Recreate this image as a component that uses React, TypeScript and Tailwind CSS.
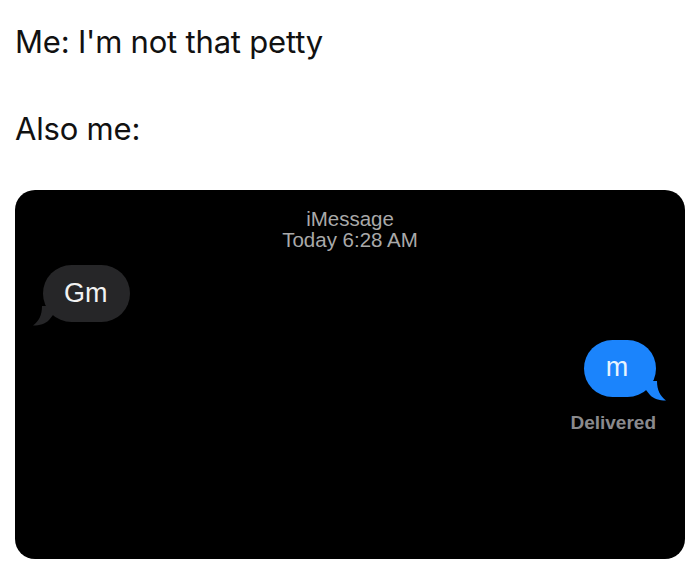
import React from "react";

function Tail({ color, flip }: { color: string; flip?: boolean }) {
  return (
    <svg
      width="20"
      height="20"
      viewBox="0 0 20 20"
      className={flip ? "absolute right-[-10px] bottom-[-4px]" : "absolute left-[-10px] bottom-[-4px]"}
      style={flip ? { transform: "scaleX(-1)" } : undefined}
    >
      <path d="M9 0 C9 9 6 15 0 19.5 C7 19.5 12 18 16 14 L20 9 L20 0 Z" fill={color} />
    </svg>
  );
}

export default function App() {
  return (
    <div className="w-[700px] h-[571px] bg-white overflow-hidden" style={{ fontFamily: '"Liberation Sans", Arial, sans-serif' }}>
      <div className="pl-[15px] pt-[24px] text-[31px] leading-[36px] text-[#111] tracking-[-0.2px]" style={{ fontFamily: 'Inter, "Liberation Sans", sans-serif' }}>
        <div>Me: I'm not that petty</div>
        <div className="mt-[51px]">Also me:</div>
      </div>
      <div className="mx-[15px] mt-[43px] h-[369px] rounded-[20px] bg-black flex flex-col">
        <div className="pt-[18px] text-center text-[20.5px] leading-[21px] text-[#a9a9a9]">
          <div>iMessage</div>
          <div>Today 6:28 AM</div>
        </div>
        <div className="mt-[15px] pl-[28px] flex">
          <div className="relative h-[57px] rounded-full bg-[#262628] pl-[21px] pr-[22px] flex items-center text-[27px] text-[#f2f2f2]">
            Gm
            <Tail color="#262628" />
          </div>
        </div>
        <div className="mt-[18px] pr-[29px] flex flex-col items-end">
          <div className="relative h-[57px] w-[72px] rounded-full bg-[#1b84fc] flex items-center justify-center text-[27px] text-[#e8f4ff]">
            <span className="pb-[3px] pr-[6px]">m</span>
            <Tail color="#1b84fc" flip />
          </div>
          <div className="mt-[15px] text-[19px] leading-[22px] font-semibold text-[#8a8a8d]">Delivered</div>
        </div>
      </div>
    </div>
  );
}
